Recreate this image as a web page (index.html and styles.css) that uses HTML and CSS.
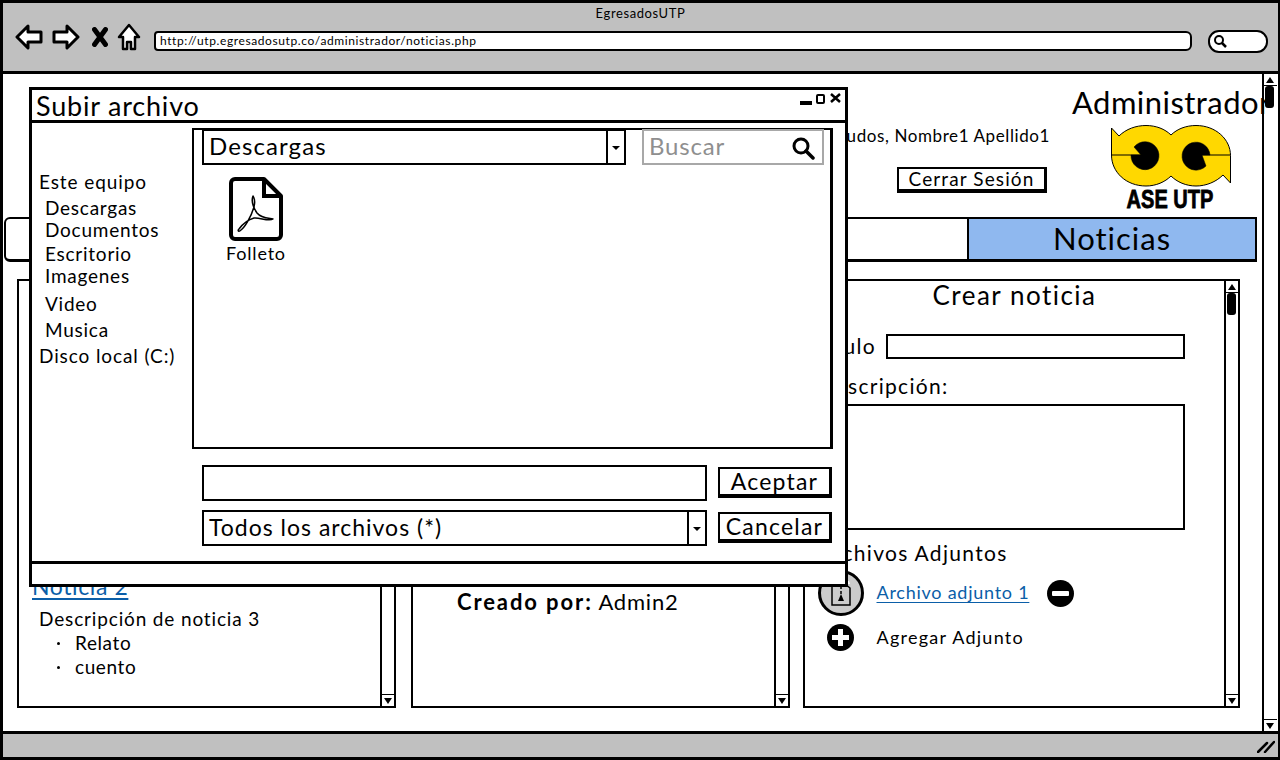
FILE: index.html
```html
<!DOCTYPE html>
<html lang="es">
<head>
  <meta charset="UTF-8" />
  <title>EgresadosUTP</title>
  <link rel="stylesheet" href="styles.css">
</head>
<body>

<div class="window">
  <header class="browser-bar">
    <div class="browser-title">EgresadosUTP</div>
    <div class="browser-tools">
      <svg class="tool tool-back" width="28" height="26" viewBox="0 0 28 26"><path d="M13 2 2 13l11 11v-6h13V8H13z" fill="#fff" stroke="#000" stroke-width="3" stroke-linejoin="round"/></svg>
      <svg class="tool tool-next" width="28" height="26" viewBox="0 0 28 26"><path d="M15 2l11 11-11 11v-6H2V8h13z" fill="#fff" stroke="#000" stroke-width="3" stroke-linejoin="round"/></svg>
      <svg class="tool tool-stop" width="16" height="20" viewBox="0 0 16 20"><path d="M2.500 2.500l11 15M13.500 2.500l-11 15" stroke="#000" stroke-width="5" stroke-linecap="round"/></svg>
      <svg class="tool tool-home" width="24" height="28" viewBox="0 0 24 28"><path d="M12 2 2 14h4v12h4v-7h4v7h4V14h4z" fill="#fff" stroke="#000" stroke-width="2.500" stroke-linejoin="round"/></svg>
      <div class="url-bar">http://utp.egresadosutp.co/administrador/noticias.php</div>
      <div class="browser-search">
        <svg width="14" height="14" viewBox="0 0 14 14"><circle cx="6" cy="6" r="4" fill="none" stroke="#000" stroke-width="2"/><path d="M9 9l4 4" stroke="#000" stroke-width="2.500"/></svg>
      </div>
    </div>
  </header>

  <div class="viewport">
    <main class="page">
      <div class="page-head">
        <div class="greeting">
          <p class="greeting-text">Saludos, Nombre1 Apellido1</p>
          <div class="button logout">Cerrar Sesión</div>
        </div>
        <div class="admin">
          <h1 class="admin-name">Administrador</h1>
          <div class="logo">
            <svg width="120" height="62" viewBox="0 0 120 62">
              <path d="M.5 3 8 11C15 4 25 .5 35 .5 45 .5 54 4 60 10 66 4 75 .5 85 .5c20 0 34.500 14 34.500 30V58L112 50c-7 7-17 11-27 11-10 0-19-4-25-10-6 6-15 10-25 10C15 61 .5 47 .5 30z" fill="#ffd800" stroke="#000"/>
              <path d="M30 30 23 22A14 14 0 1 1 20 30z" fill="#000" stroke="#000" stroke-width=".5"/>
              <path d="M91 30H99A14 14 0 1 0 95 41z" fill="#000" stroke="#000" stroke-width=".5"/>
              <path d="M.5 30H30M91 30h28.500" stroke="#000"/>
            </svg>
            <div class="logo-text">ASE UTP</div>
          </div>
        </div>
      </div>

      <nav class="tabs">
        <div class="tab"></div>
        <div class="tab tab-active">Noticias</div>
      </nav>

      <div class="panels">
        <section class="panel panel-news">
          <div class="panel-body">
            <a class="link news-link">Noticia 2</a>
            <p class="news-desc">Descripción de noticia 3</p>
            <ul class="news-list">
              <li>Relato</li>
              <li>cuento</li>
            </ul>
          </div>
          <div class="scroll"><span class="scroll-space"></span><span class="scroll-btn scroll-down"></span></div>
        </section>

        <section class="panel panel-author">
          <div class="panel-body">
            <p class="author"><b>Creado por:</b> Admin2</p>
          </div>
          <div class="scroll"><span class="scroll-space"></span><span class="scroll-btn scroll-down"></span></div>
        </section>

        <section class="panel panel-form">
          <div class="panel-body">
            <h2 class="form-title">Crear noticia</h2>
            <div class="form-row">
              <label class="form-label label-title">Título</label>
              <div class="field field-title"></div>
            </div>
            <label class="form-label label-desc">Descripción:</label>
            <div class="field field-desc"></div>
            <div class="form-label label-files">Archivos Adjuntos</div>
            <div class="file-row">
              <span class="file-badge">
                <svg width="20" height="26" viewBox="0 0 20 26"><path d="M1 4h13l5 4v17H1z" fill="#ccc" stroke="#000" stroke-width="1.500"/><path d="M14 1h4l1 3h-5z" fill="#fff"/><path d="M10 7v2M10 11v3" stroke="#000" stroke-width="1.500"/><path d="M10 14l3 7H7z" fill="#000"/></svg>
              </span>
              <a class="link file-link">Archivo adjunto 1</a>
              <svg class="round-icon" width="27" height="27" viewBox="0 0 27 27"><circle cx="13.500" cy="13.500" r="13.500"/><rect x="5" y="11" width="17" height="5" rx="1" fill="#fff"/></svg>
            </div>
            <div class="file-add">
              <svg class="round-icon" width="27" height="27" viewBox="0 0 27 27"><circle cx="13.500" cy="13.500" r="13.500"/><path d="M11 5h5v6h6v5h-6v6h-5v-6H5v-5h6z" fill="#fff"/></svg>
              <span>Agregar Adjunto</span>
            </div>
          </div>
          <div class="scroll">
            <span class="scroll-btn scroll-up"></span>
            <span class="scroll-thumb"></span>
            <span class="scroll-space"></span>
            <span class="scroll-btn scroll-down"></span>
          </div>
        </section>
      </div>
    </main>

    <div class="scroll scroll-page">
      <span class="scroll-btn scroll-up"></span>
      <span class="scroll-thumb"></span>
      <span class="scroll-space"></span>
      <span class="scroll-btn scroll-down"></span>
    </div>
  </div>

  <footer class="status-bar">
    <svg width="18" height="14" viewBox="0 0 18 14"><path d="M1 13 10 4M8 13l9-10" stroke="#000" stroke-width="2.500" stroke-linecap="round"/></svg>
  </footer>

  <!-- dialogo -->
  <div class="dialog">
    <div class="dialog-title">
      <span>Subir archivo</span>
      <div class="dialog-controls">
        <i class="ctl-min"></i>
        <i class="ctl-max"></i>
        <svg width="11" height="10" viewBox="0 0 11 10"><path d="M1 1l9 8M10 1 1 9" stroke="#000" stroke-width="2.500"/></svg>
      </div>
    </div>
    <div class="dialog-body">
      <ul class="places">
        <li>Este equipo</li>
        <li class="sub">Descargas</li>
        <li class="sub">Documentos</li>
        <li class="sub">Escritorio</li>
        <li class="sub">Imagenes</li>
        <li class="sub">Video</li>
        <li class="sub">Musica</li>
        <li>Disco local (C:)</li>
      </ul>
      <div class="dialog-main">
        <div class="files">
          <div class="files-top">
            <div class="select select-folder">
              <span>Descargas</span>
              <span class="select-arrow"></span>
            </div>
            <div class="search">
              <span>Buscar</span>
              <svg width="24" height="24" viewBox="0 0 24 24"><circle cx="10" cy="10" r="7" fill="none" stroke="#000" stroke-width="3"/><path d="M15 15l7 7" stroke="#000" stroke-width="3.500" stroke-linecap="round"/></svg>
            </div>
          </div>
          <div class="file-item">
            <svg width="54" height="64" viewBox="0 0 54 64">
              <path d="M6 2h29l17 17v39a4 4 0 0 1-4 4H6a4 4 0 0 1-4-4V6a4 4 0 0 1 4-4z" fill="#fff" stroke="#000" stroke-width="4" stroke-linejoin="round"/>
              <path d="M35 2v17h17" fill="none" stroke="#000" stroke-width="4"/>
              <path d="M24 19c-2 5 0 11 4 17 4 5 10 5 16 6-4 3-14-2-19-1-7 2-12 7-15 11-2 2 0 3 2 1 4-3 10-13 13-23 1-4 1-8-1-11z" fill="none" stroke="#000" stroke-width="1.500" stroke-linejoin="round"/>
            </svg>
            <span>Folleto</span>
          </div>
        </div>
        <div class="dialog-row">
          <div class="field field-name"></div>
          <div class="button">Aceptar</div>
        </div>
        <div class="dialog-row">
          <div class="select select-type">
            <span>Todos los archivos (*)</span>
            <span class="select-arrow"></span>
          </div>
          <div class="button">Cancelar</div>
        </div>
      </div>
    </div>
    <div class="dialog-foot"></div>
  </div>
</div>

</body>
</html>
```

FILE: styles.css
```css
* {
  box-sizing: border-box;
}
html, body {
  margin: 0;
  height: 100%;
  overflow: hidden;
}
body {
  background: #fff;
  color: #000;
  font-family: "Lato", "Open Sans", sans-serif;
  font-size: 19px;
  letter-spacing: 0.6px;
}
p, h1, h2, ul {
  margin: 0;
  padding: 0;
  font-weight: normal;
}
ul {
  list-style: none;
}

.window {
  position: relative;
  width: 1280px;
  height: 760px;
  display: flex;
  flex-direction: column;
  border: 3px solid #000;
  border-right-width: 2px;
}

/* barra del navegador */
.browser-bar {
  height: 71px;
  background: #c0c0c0;
  border-bottom: 3px solid #000;
  flex: none;
}
.browser-title {
  font-size: 13px;
  line-height: 16px;
  padding-top: 2px;
  height: 19px;
  text-align: center;
  letter-spacing: 0.6px;
}
.browser-tools {
  display: flex;
  align-items: center;
  padding: 1px 0 0 12px;
  height: 37px;
}
.tool {
  margin-bottom: 8px;
  flex: none;
}
.tool-next {
  margin-left: 9px;
}
.tool-stop {
  margin-left: 12px;
}
.tool-home {
  margin-left: 9px;
}
.url-bar {
  margin-left: 13px;
  width: 1038px;
  height: 20px;
  background: #fff;
  border: 2.500px solid #000;
  border-radius: 4px 6px 6px 4px;
  font-size: 12px;
  line-height: 15px;
  padding-left: 4px;
}
.browser-search {
  margin-left: 16px;
  width: 60px;
  height: 23px;
  background: #fff;
  border: 2.500px solid #000;
  border-radius: 11px;
  padding: 2px 0 0 3px;
}
.browser-search svg {
  display: block;
}

/* pagina */
.viewport {
  flex: 1;
  display: flex;
  min-height: 0;
}
.page {
  flex: 1;
  min-width: 0;
  padding-left: 1px;
}
.page-head {
  height: 143px;
  display: flex;
  justify-content: flex-end;
}
.greeting {
  padding-top: 50px;
  display: flex;
  flex-direction: column;
  align-items: flex-end;
}
.greeting-text {
  font-size: 17px;
  line-height: 24px;
  white-space: nowrap;
}
.admin {
  width: 190px;
  margin-left: 22px;
}
.admin-name {
  font-size: 31px;
  line-height: 36px;
  padding-top: 10px;
  letter-spacing: 0.45px;
  white-space: nowrap;
}
.logo {
  margin: 5px 0 0 39px;
  width: 120px;
}
.logo svg {
  display: block;
}
.logo-text {
  font-family: "Liberation Sans", sans-serif;
  font-weight: bold;
  font-size: 26px;
  line-height: 24px;
  text-align: center;
  letter-spacing: 0;
  -webkit-text-stroke: 0.8px #000;
  transform: translateX(-1px) scale(0.77, 1);
  white-space: nowrap;
}

.button {
  background: #fff;
  border: 2px solid #000;
  border-right-width: 3px;
  border-bottom-width: 4px;
  text-align: center;
}
.logout {
  width: 150px;
  height: 26px;
  margin: 19px 3px 0 0;
  font-size: 19px;
  letter-spacing: 1.1px;
  line-height: 20px;
}

.tabs {
  height: 45px;
  margin: 0 5px 0 0;
  display: flex;
  border: 2px solid #000;
  border-bottom-width: 3px;
  border-radius: 6px 0 0 6px;
}
.tab {
  flex: 1;
}
.tab-active {
  flex: none;
  width: 288px;
  background: #8fb8ef;
  border-left: 2px solid #000;
  font-size: 31px;
  line-height: 38px;
  letter-spacing: 1px;
  text-align: center;
}

.panels {
  display: flex;
  margin: 17px 0 0 13px;
  height: 429px;
}
.panel {
  display: flex;
  flex: none;
  border: 2.500px solid #000;
  background: #fff;
  min-width: 0;
}
.panel-news {
  width: 379px;
}
.panel-author {
  width: 379px;
  margin-left: 15px;
}
.panel-form {
  width: 437px;
  margin-left: 13px;
}
.panel-body {
  flex: 1;
  min-width: 0;
}

.scroll {
  flex: none;
  width: 14px;
  display: flex;
  flex-direction: column;
  border-left: 2px solid #000;
}
.scroll-space {
  flex: 1;
}
.scroll-btn {
  height: 12px;
  position: relative;
  flex: none;
}
.scroll-up {
  border-bottom: 1px solid #000;
}
.scroll-down {
  border-top: 1px solid #000;
}
.scroll-btn::after {
  content: "";
  position: absolute;
  left: 2px;
  top: 3px;
  border-left: 4px solid transparent;
  border-right: 4px solid transparent;
}
.scroll-up::after {
  border-bottom: 6px solid #000;
}
.scroll-down::after {
  border-top: 6px solid #000;
}
.scroll-thumb {
  width: 9px;
  height: 22px;
  margin: 0 0 0 1px;
  background: #000;
  border-radius: 3px;
  flex: none;
}
.scroll-page {
  width: 15px;
  margin-right: 1px;
  border-left-width: 2px;
}

.link {
  color: #0b5ea8;
  text-decoration: underline;
  text-underline-offset: 3px;
}

/* noticias */
.panel-news .panel-body {
  padding: 291px 0 0 13px;
}
.news-link {
  font-size: 23px;
  line-height: 28px;
}
.news-desc {
  margin: 7px 0 0 7px;
  line-height: 24px;
  letter-spacing: 0.85px;
}
.news-list {
  margin-left: 43px;
}
.news-list li {
  line-height: 24px;
  position: relative;
}
.news-list li::before {
  content: "";
  position: absolute;
  left: -18px;
  top: 11px;
  width: 3px;
  height: 3px;
  background: #000;
  border-radius: 50%;
}
.panel-author .panel-body {
  padding: 307px 0 0 44px;
}
.author {
  font-size: 22px;
  letter-spacing: 0.8px;
  line-height: 28px;
}
.author b {
  letter-spacing: 1.9px;
}

/* formulario */
.panel-form .panel-body {
  padding: 0 0 0 13.500px;
}
.form-title {
  font-size: 26px;
  line-height: 30px;
  letter-spacing: 1.5px;
  text-align: center;
  margin: -1px 0 0 -13.500px;
}
.form-label {
  font-size: 21px;
  line-height: 26px;
  letter-spacing: 1.3px;
  white-space: nowrap;
}
.form-row {
  display: flex;
  align-items: center;
  margin-top: 23px;
  height: 26px;
}
.label-title {
  width: 70px;
  margin-left: -3px;
}
.field {
  background: #fff;
  border: 2px solid #000;
}
.field-title {
  width: 299px;
  height: 25px;
}
.label-desc {
  display: block;
  margin: 14px 0 0 0;
}
.field-desc {
  width: 352px;
  height: 126px;
  margin: 5px 0 0 14px;
}
.label-files {
  margin-top: 10px;
}
.file-row {
  display: flex;
  align-items: center;
  margin-top: 4px;
}
.file-badge {
  width: 46px;
  height: 46px;
  margin-left: -1px;
  border-radius: 50%;
  border: 3px solid #000;
  background: #ccc;
  display: flex;
  align-items: center;
  justify-content: center;
}
.file-link {
  margin-left: 13px;
  font-size: 18px;
  letter-spacing: 0.75px;
  position: relative;
  top: -1px;
}
.round-icon {
  fill: #000;
  flex: none;
}
.file-row .round-icon {
  margin-left: 18px;
}
.file-add {
  display: flex;
  align-items: center;
  margin: 8px 0 0 8px;
  font-size: 18px;
  letter-spacing: 1.25px;
}
.file-add span {
  margin-left: 23px;
  position: relative;
  top: -1px;
}

/* dialogo */
.dialog {
  position: absolute;
  left: 26px;
  top: 84px;
  width: 819px;
  height: 500px;
  background: #fff;
  border: 3px solid #000;
  display: flex;
  flex-direction: column;
}
.dialog-title {
  height: 33px;
  flex: none;
  border-bottom: 3px solid #000;
  display: flex;
  justify-content: space-between;
  font-size: 27px;
  letter-spacing: 0.8px;
  line-height: 31px;
  padding-left: 4px;
}
.dialog-controls {
  display: flex;
  align-items: flex-start;
  gap: 5px;
  padding: 3px 4px 0 0;
}
.ctl-min {
  width: 12px;
  height: 4px;
  background: #000;
  margin: 8px -1px 0 0;
}
.ctl-max {
  width: 9px;
  height: 10px;
  border: 2px solid #000;
  border-radius: 2px;
  margin-top: 1px;
}
.dialog-body {
  flex: 1;
  display: flex;
  min-height: 0;
}
.places {
  width: 160px;
  padding: 48px 0 0 7px;
  flex: none;
  font-size: 19px;
  letter-spacing: 0.9px;
}
.places li {
  line-height: 22px;
  height: 22px;
  white-space: nowrap;
}
.places li.sub {
  padding-left: 6px;
  letter-spacing: 0.75px;
}
.places li:nth-child(2), .places li:nth-child(7), .places li:nth-child(8) {
  margin-top: 4px;
}
.places li:nth-child(4) {
  margin-top: 2px;
}
.places li:nth-child(6) {
  margin-top: 6px;
}
.dialog-main {
  flex: 1;
  min-width: 0;
  padding: 5px 12px 0 0;
}
.files {
  height: 321px;
  border: 2.500px solid #000;
  border-right-width: 3px;
}
.files-top {
  display: flex;
  gap: 16px;
  padding-left: 8px;
  margin-top: -1px;
}
.select {
  display: flex;
  justify-content: space-between;
  background: #fff;
  border: 2px solid #000;
  font-size: 23px;
  letter-spacing: 1px;
  line-height: 30px;
  padding-left: 5px;
}
.select-folder {
  width: 424px;
  height: 36px;
  font-size: 24px;
  letter-spacing: 1.1px;
}
.select-type {
  width: 505px;
  height: 36px;
  letter-spacing: 1px;
}
.select-arrow {
  width: 18px;
  border-left: 2px solid #000;
  position: relative;
  flex: none;
}
.select-arrow::after {
  content: "";
  position: absolute;
  left: 4px;
  top: 15px;
  border-left: 4px solid transparent;
  border-right: 4px solid transparent;
  border-top: 4px solid #000;
}
.search {
  width: 182px;
  height: 36px;
  border: 2px solid #a8a8a8;
  display: flex;
  justify-content: space-between;
  align-items: center;
  padding: 0 7px 3px 5px;
  font-size: 24px;
  letter-spacing: 0.8px;
  color: #8f8f8f;
}
.search svg {
  display: block;
  margin-top: 5px;
}
.file-item {
  width: 62px;
  margin: 12px 0 0 31px;
  display: flex;
  flex-direction: column;
  align-items: center;
  font-size: 18px;
  letter-spacing: 0.8px;
  line-height: 22px;
  gap: 1px;
}
.file-item svg {
  display: block;
}
.dialog-row {
  display: flex;
  align-items: flex-start;
  justify-content: space-between;
  margin: 16px 1px 0 10px;
  height: 36px;
}
.dialog-row + .dialog-row {
  margin-top: 9px;
}
.field-name {
  width: 505px;
  height: 36px;
}
.dialog-row .button {
  width: 114px;
  height: 31px;
  margin-top: 2px;
  font-size: 23px;
  letter-spacing: 1.2px;
  line-height: 25px;
}
.dialog-foot {
  height: 23px;
  flex: none;
  border-top: 3px solid #000;
}

.status-bar {
  height: 26px;
  flex: none;
  background: #c0c0c0;
  border-top: 3px solid #000;
  display: flex;
  justify-content: flex-end;
  align-items: center;
  padding-right: 3px;
}
```
